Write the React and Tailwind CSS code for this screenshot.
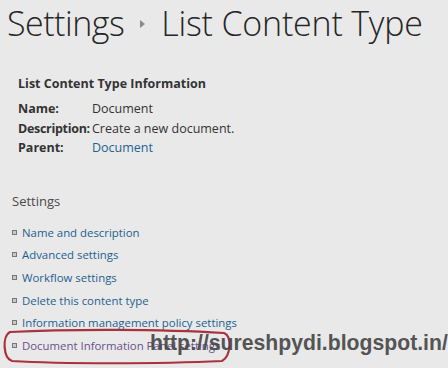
const links = [
  { label: "Name and description" },
  { label: "Advanced settings" },
  { label: "Workflow settings" },
  { label: "Delete this content type" },
  { label: "Information management policy settings" },
  { label: "Document Information Panel settings", visited: true },
];

const App = () => {
  return (
    <div
      className="relative w-[448px] h-[368px] overflow-hidden bg-[#e9e9e9] text-[#333]"
      style={{ fontFamily: "'Open Sans', 'Noto Sans', sans-serif" }}
    >
      {/* page title */}
      <div className="flex items-center pl-[7px] pt-[1px] h-[44px] text-[34px] font-light leading-none text-[#262626] tracking-[-0.5px]">
        <span>Settings</span>
        <span className="ml-[16px] mr-[16px] mt-[2px] w-0 h-0 border-y-[4px] border-y-transparent border-l-[5px] border-l-[#8a8a8a]" />
        <span className="tracking-[-0.2px]">List Content Type</span>
      </div>

      {/* info block */}
      <div className="pl-[18px] pt-[31px] text-[12.5px]">
        <div className="font-bold text-[#333] leading-[18px]">List Content Type Information</div>
        <div className="mt-[6px] flex flex-col">
          <div className="flex h-[20px] items-center">
            <span className="w-[74px] font-bold">Name:</span>
            <span>Document</span>
          </div>
          <div className="flex h-[20px] items-center">
            <span className="w-[74px] font-bold tracking-[-0.3px]">Description:</span>
            <span>Create a new document.</span>
          </div>
          <div className="flex h-[19px] items-center">
            <span className="w-[74px] font-bold">Parent:</span>
            <span className="text-[#1f6391]">Document</span>
          </div>
        </div>
      </div>

      {/* settings links */}
      <div className="pl-[12px] pt-[33px] text-[11.4px]">
        <div className="text-[13px] text-[#4a4a4a] leading-[20px]">Settings</div>
        <ul className="mt-[10px] flex flex-col">
          {links.map((l) => (
            <li key={l.label} className="flex items-center h-[22.6px]">
              <span className="w-[5px] h-[5px] border border-[#777] bg-[#c9c9c9] mr-[5px]" />
              <span className={l.visited ? "text-[#6b4f8c]" : "text-[#1d5f8f]"}>{l.label}</span>
            </li>
          ))}
        </ul>
      </div>

      {/* red circle annotation */}
      <svg className="absolute left-0 top-[328px]" width="236" height="38" viewBox="0 0 236 38">
        <path
          d="M10 4 C 70 1, 160 1, 224 5 C 232 8, 231 28, 222 33 C 160 36, 60 36, 12 33 C 3 30, 2 8, 10 4 Z"
          fill="none"
          stroke="#a8323e"
          strokeWidth="2.2"
        />
      </svg>

      {/* watermark */}
      <div
        className="absolute left-[150px] top-[332px] text-[21.2px] font-bold text-[#444] opacity-90 leading-none"
        style={{ fontFamily: "'Liberation Sans', Arial, sans-serif" }}
      >
        http://sureshpydi.blogspot.in/
      </div>
    </div>
  );
};

export default App;
